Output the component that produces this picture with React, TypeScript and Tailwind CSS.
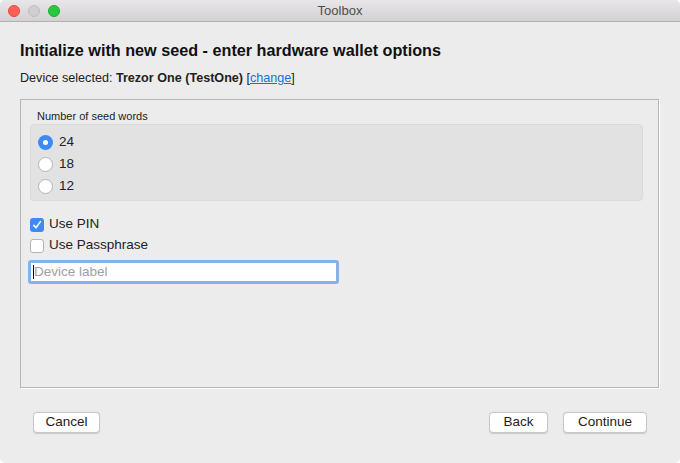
import React from "react";

function Radio({ checked, label }: { checked?: boolean; label: string }) {
  return (
    <div className="flex items-center h-[22px]">
      {checked ? (
        <div className="w-[15px] h-[15px] rounded-full bg-[#3d8af7] flex items-center justify-center">
          <div className="w-[5px] h-[5px] rounded-full bg-white" />
        </div>
      ) : (
        <div className="w-[15px] h-[15px] rounded-full bg-white border border-[#b4b4b4]" />
      )}
      <span className="ml-[6px] text-[13.5px] text-[#222]">{label}</span>
    </div>
  );
}

function Check({ checked, label }: { checked?: boolean; label: string }) {
  return (
    <div className="flex items-center h-[21px]">
      {checked ? (
        <div className="w-[14px] h-[14px] rounded-[3px] bg-[#3d8af7] flex items-center justify-center">
          <svg width="10" height="10" viewBox="0 0 10 10">
            <path d="M1.8 5.4 L4 7.8 L8.4 1.6" fill="none" stroke="white" strokeWidth="1.6" strokeLinecap="round" strokeLinejoin="round" />
          </svg>
        </div>
      ) : (
        <div className="w-[14px] h-[14px] rounded-[3px] bg-white border border-[#b4b4b4]" />
      )}
      <span className="ml-[5px] text-[13.5px] text-[#222]">{label}</span>
    </div>
  );
}

function Btn({ label, w }: { label: string; w: string }) {
  return (
    <div
      className={`h-[21px] ${w} bg-white rounded-[4px] border border-[#c8c8c8] shadow-[0_0.5px_1px_rgba(0,0,0,0.15)] flex items-center justify-center text-[13.5px] text-[#222]`}
    >
      {label}
    </div>
  );
}

export default function App() {
  return (
    <div
      className="w-[680px] h-[463px] bg-[#ececec] flex flex-col overflow-hidden rounded-[5px]"
      style={{ fontFamily: '"Liberation Sans", Arial, sans-serif' }}
    >
      <div className="h-[22px] shrink-0 bg-gradient-to-b from-[#e8e6e8] to-[#d3d1d3] border-b border-[#b1b1b1] flex items-center relative">
        <div className="flex items-center gap-[8px] ml-[8px]">
          <div className="w-[12px] h-[12px] rounded-full bg-[#fe5f57] border border-[#e2463f]" />
          <div className="w-[12px] h-[12px] rounded-full bg-[#cfcfcf] border border-[#bdbdbd]" />
          <div className="w-[12px] h-[12px] rounded-full bg-[#28c840] border border-[#1eab2d]" />
        </div>
        <div className="absolute inset-0 flex items-center justify-center text-[13px] text-[#4d4d4d]">
          Toolbox
        </div>
      </div>

      <div className="px-[20px] pt-[18px]">
        <div className="text-[16.2px] leading-[20px] font-bold text-[#111]">
          Initialize with new seed - enter hardware wallet options
        </div>
        <div className="mt-[11px] text-[12.6px] leading-[15px] text-[#222]">
          Device selected: <span className="font-bold">Trezor One (TestOne)</span>{" "}
          [<span className="text-[#1a6ee0] underline">change</span>]
        </div>
      </div>

      <div className="ml-[20px] mt-[13px] w-[639px] h-[289px] border border-[#b5b5b5] shadow-[1px_1px_0_#ffffff] flex flex-col">
        <div className="pl-[16px] pt-[10px] text-[11px] leading-[13px] text-[#222]">Number of seed words</div>
        <div className="ml-[9px] mt-[1px] w-[613px] h-[77px] rounded-[4px] bg-[#e2e2e2] border border-[#dadada] pl-[7px] pt-[6px]">
          <Radio checked label="24" />
          <Radio label="18" />
          <Radio label="12" />
        </div>
        <div className="ml-[9px] mt-[13px]">
          <Check checked label="Use PIN" />
          <Check label="Use Passphrase" />
        </div>
        <div className="ml-[7px] mt-[4px] w-[311px] h-[24px] rounded-[3px] border-[3px] border-[#87b1ea] bg-white flex items-center">
          <div className="w-[1px] h-[14px] bg-black ml-[2px]" />
          <span className="text-[13.5px] text-[#a0a0a0]">Device label</span>
        </div>
      </div>

      <div className="flex items-center mt-[24px] px-[33px]">
        <Btn label="Cancel" w="w-[67px]" />
        <div className="flex-1" />
        <Btn label="Back" w="w-[59px]" />
        <div className="w-[15px]" />
        <Btn label="Continue" w="w-[84px]" />
      </div>
    </div>
  );
}
